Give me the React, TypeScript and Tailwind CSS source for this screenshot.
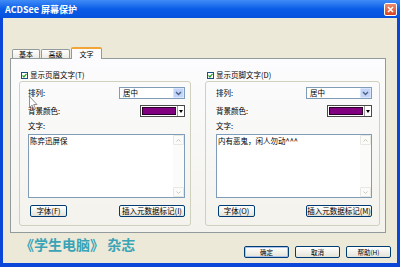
import React from "react";

const Chevron = () => (
  <svg width="7" height="5" viewBox="0 0 7 5">
    <path d="M1 1l2.5 2.5L6 1" fill="none" stroke="#4d6185" strokeWidth="1.4" />
  </svg>
);

function Check({ label }: { label: string }) {
  return (
    <div className="flex items-center h-[8px] ml-[2px] gap-[2px]">
      <div className="w-[7px] h-[7px] border border-[#1c5180] bg-white flex items-center justify-center">
        <svg width="5" height="5" viewBox="0 0 5 5">
          <path d="M0.5 2.4l1.4 1.6L4.5 0.8" fill="none" stroke="#21a121" strokeWidth="1.2" />
        </svg>
      </div>
      <span className="text-[7.5px] leading-none">{label}</span>
    </div>
  );
}

function Btn({ children, w, def, small }: { children: React.ReactNode; w: string; def?: boolean; small?: boolean }) {
  return (
    <div
      className={`${w} h-[12px] border border-[#003c74] rounded-[2px] bg-gradient-to-b from-white to-[#e5e3d8] flex items-center justify-center leading-none ${
        small ? "text-[6.5px]" : "text-[7.5px]"
      } ${def ? "shadow-[inset_0_0_0_1px_#a9c2ee]" : ""}`}
    >
      {children}
    </div>
  );
}

function TextBox({ text }: { text: string }) {
  return (
    <div className="h-[64px] border border-[#7f9db9] bg-white flex">
      <div className="flex-1 pl-[1px] pt-[2px] text-[7.5px] leading-none">{text}</div>
      <div className="w-[11px] flex flex-col justify-between bg-[#fbfbf9]">
        <div className="h-[10px] border border-[#e8e8e2] rounded-[1px] flex items-center justify-center">
          <svg width="5" height="3" viewBox="0 0 5 3">
            <path d="M0.5 2.5L2.5 0.5L4.5 2.5" fill="none" stroke="#c9c7ba" strokeWidth="1" />
          </svg>
        </div>
        <div className="h-[10px] border border-[#e8e8e2] rounded-[1px] flex items-center justify-center">
          <svg width="5" height="3" viewBox="0 0 5 3">
            <path d="M0.5 0.5L2.5 2.5L4.5 0.5" fill="none" stroke="#c9c7ba" strokeWidth="1" />
          </svg>
        </div>
      </div>
    </div>
  );
}

function Group({
  check,
  text,
  fontKey,
  insKey,
  pad,
}: {
  check: string;
  text: string;
  fontKey: string;
  insKey: string;
  pad: string;
}) {
  return (
    <div className="flex flex-col">
      <div className="mt-[12px]">
        <Check label={check} />
      </div>
      <div className={`mt-[2px] h-[145px] border border-[#d0d0bf] rounded-[3px] flex flex-col ${pad}`}>
        <div className="mt-[5px] flex items-center justify-between">
          <span className="text-[7.5px] leading-none">排列:</span>
          <div className="w-[66px] h-[12px] border border-[#7f9db9] bg-white flex items-center">
            <span className="flex-1 pl-[3px] text-[7.5px] leading-none">居中</span>
            <div className="w-[11px] h-[10px] rounded-[1px] bg-[#c3d4fb] border border-[#dbe6fd] flex items-center justify-center">
              <Chevron />
            </div>
          </div>
        </div>
        <div className="mt-[6px] flex items-center justify-between">
          <span className="text-[7.5px] leading-none">背景颜色:</span>
          <div className="w-[45px] h-[12px] border border-[#4a4a4a] bg-white flex">
            <div className="flex-1 m-[1px] bg-[#800080] border border-[#2a002a]" />
            <div className="w-[7px] border-l border-[#9a9a9a] flex items-center justify-center">
              <svg width="4" height="3" viewBox="0 0 4 3">
                <path d="M0 0h4L2 3z" fill="#000" />
              </svg>
            </div>
          </div>
        </div>
        <div className="mt-[4px] h-[10px] flex items-center text-[7.5px] leading-none">文字:</div>
        <div className="mt-[3px]">
          <TextBox text={text} />
        </div>
        <div className="mt-[7px] flex justify-between">
          <div className="ml-[2px]">
            <Btn w="w-[37px]">字体({fontKey})</Btn>
          </div>
          <Btn w="w-[66px]">插入元数据标记({insKey})</Btn>
        </div>
      </div>
    </div>
  );
}

export default function App() {
  return (
    <div className="relative w-[400px] h-[267px] bg-[#0a47d8] flex flex-col overflow-hidden font-['Noto_Sans_CJK_SC','Liberation_Sans',sans-serif] text-black">
      {/* title bar */}
      <div className="h-[18px] bg-gradient-to-b from-[#3f8cf6] via-[#0a5ce9] to-[#0651dc] flex items-center justify-between pl-[5px] pr-[3px]">
        <span className="text-white text-[9px] font-bold leading-none">ACDSee 屏幕保护</span>
        <div className="w-[13px] h-[13px] rounded-[2px] border border-white bg-gradient-to-b from-[#ec8a6c] to-[#d8431d] flex items-center justify-center">
          <svg width="7" height="7" viewBox="0 0 7 7">
            <path d="M1 1l5 5M6 1L1 6" stroke="#fff" strokeWidth="1.6" />
          </svg>
        </div>
      </div>

      {/* body */}
      <div className="flex-1 mx-[3px] mb-[4px] bg-[#ece9d8] flex flex-col">
        <div className="mt-[29px] h-[11px] pl-[9px] flex items-end">
          <div className="w-[28px] h-[9px] border-t border-x border-[#919b9c] rounded-t-[2px] bg-gradient-to-b from-white to-[#ecebe5] flex items-center justify-center text-[7px] leading-none">
            基本
          </div>
          <div className="ml-[1px] w-[29px] h-[9px] border-t border-x border-[#919b9c] rounded-t-[2px] bg-gradient-to-b from-white to-[#ecebe5] flex items-center justify-center text-[7px] leading-none">
            高级
          </div>
          <div className="relative z-10 -mb-[1px] ml-[1px] w-[31px] h-[12px] border-x border-[#919b9c] border-t-2 border-t-[#f0a536] rounded-t-[2px] bg-[#fcfcfe] flex items-center justify-center text-[7px] leading-none">
            文字
          </div>
        </div>

        <div className="ml-[7px] w-[376px] h-[175px] border border-[#919b9c] bg-gradient-to-b from-[#fcfcfe] to-[#f3f2ec] flex pl-[8px] gap-[14px]">
          <div className="w-[172px]">
            <Group check="显示页眉文字(T)" text="陈弈迅屏保" fontKey="F" insKey="I" pad="pl-[8px] pr-[5px]" />
          </div>
          <div className="w-[175px]">
            <Group check="显示页脚文字(D)" text="内有恶鬼，闲人勿动^^^" fontKey="O" insKey="M" pad="pl-[10px] pr-[7px]" />
          </div>
        </div>

        <div className="flex justify-between items-start pl-[17px] pr-[6px]">
          <span className="mt-[4px] text-[14px] leading-none font-semibold text-[#3aa3b6]">《学生电脑》 杂志</span>
          <div className="mt-[13px] flex gap-[6px]">
            <Btn w="w-[45px]" def small>
              确定
            </Btn>
            <Btn w="w-[45px]" small>
              取消
            </Btn>
            <Btn w="w-[45px]" small>
              帮助(H)
            </Btn>
          </div>
        </div>
      </div>

      {/* mouse pointer */}
      <svg className="absolute left-[29px] top-[96px]" width="9" height="14" viewBox="0 0 9 14">
        <path d="M0.5 0.5v11l2.6-2.4 1.8 4.2 1.6-0.7-1.8-4.1H8z" fill="#fff" stroke="#777" strokeWidth="0.8" />
      </svg>
    </div>
  );
}
